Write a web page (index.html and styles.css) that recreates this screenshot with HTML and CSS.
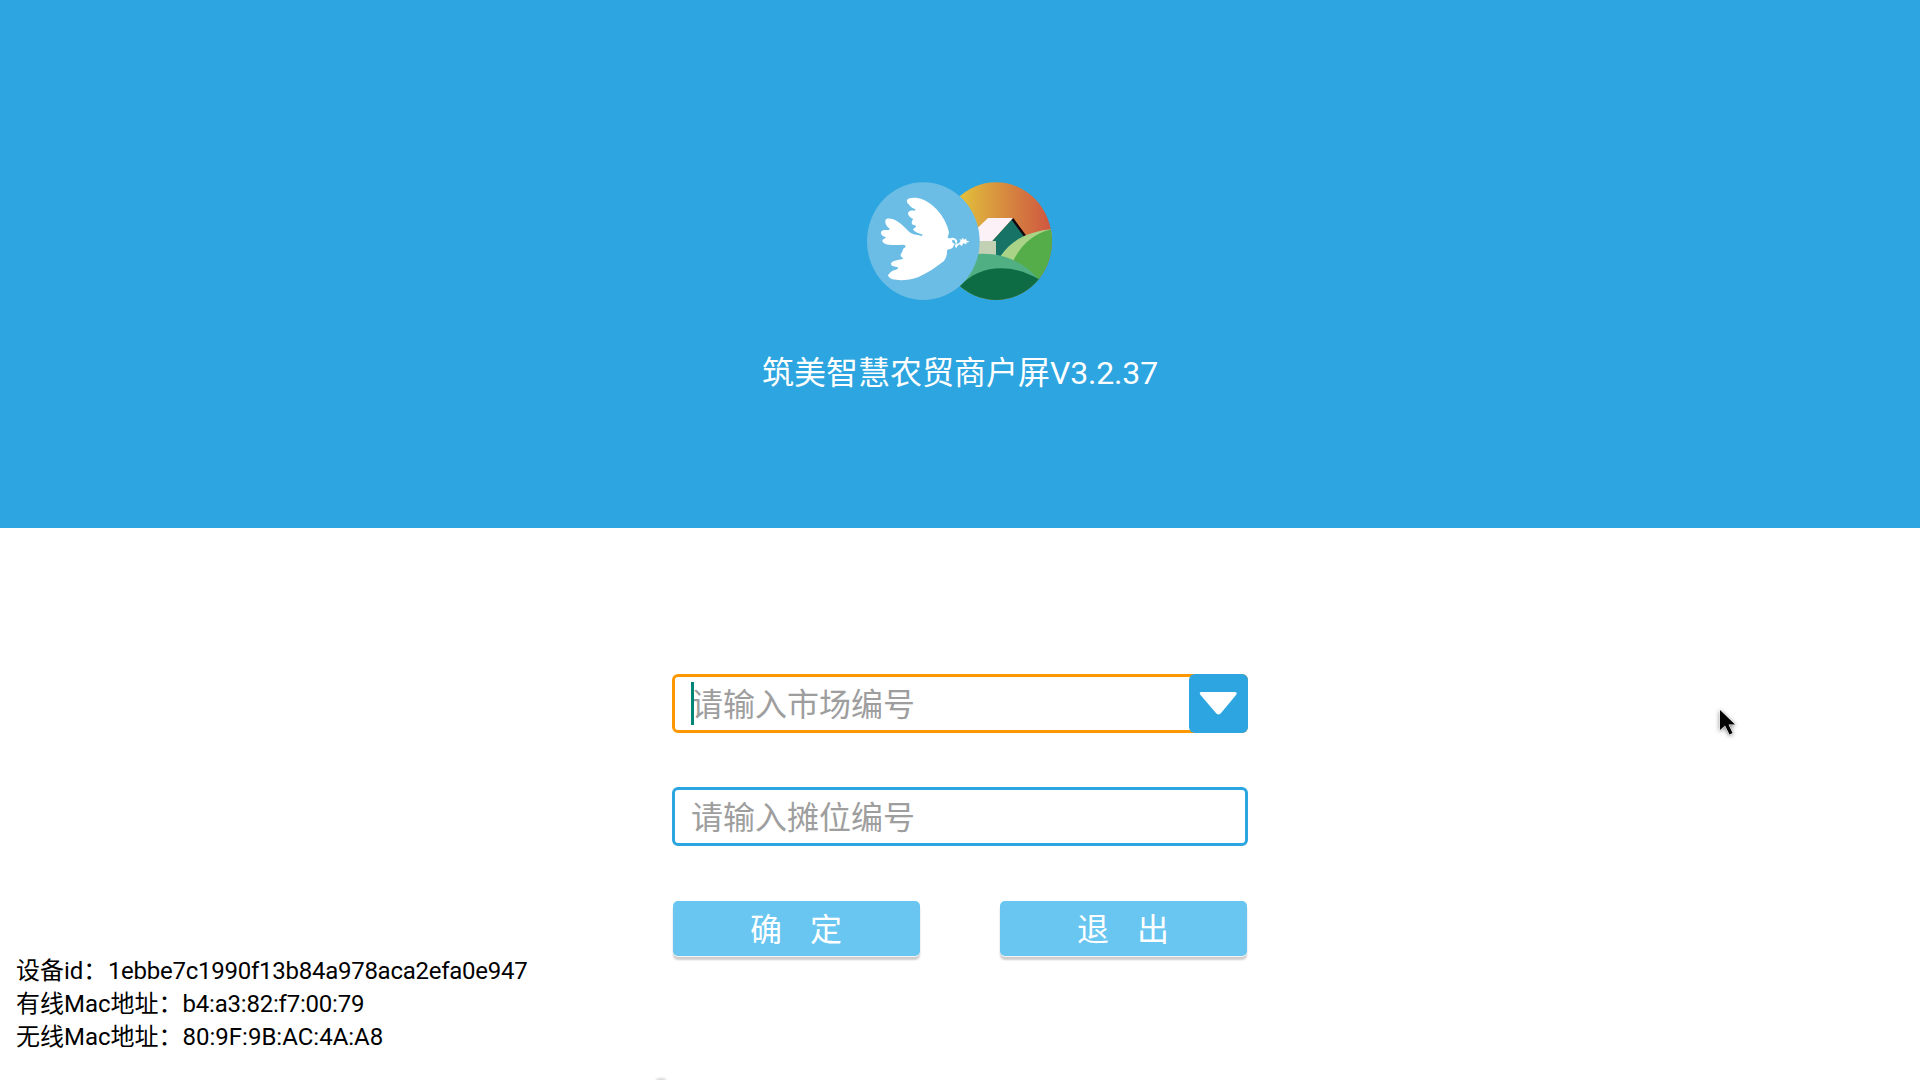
FILE: index.html
```html
<!DOCTYPE html>
<html lang="zh-CN">
<head>
<meta charset="utf-8">
<title>筑美智慧农贸商户屏</title>
<link rel="stylesheet" href="styles.css">
</head>
<body>
<header class="banner">
  <svg class="logo" viewBox="0 0 660 420" aria-hidden="true">
    <defs>
      <linearGradient id="sky" x1="330" y1="0" x2="606" y2="0" gradientUnits="userSpaceOnUse">
        <stop offset="0" stop-color="#e2c03b"/><stop offset=".5" stop-color="#d6893f"/><stop offset="1" stop-color="#cf5540"/>
      </linearGradient>
      <clipPath id="disc"><ellipse cx="438" cy="213.500" rx="168" ry="176.500"/></clipPath>
    </defs>
    <g clip-path="url(#disc)">
      <path fill="url(#sky)" d="M270 30h340v370H270z"/>
      <path fill="#fbf1f7" d="M370 186l44-42h75l-62 69h-60z"/>
      <path fill="#c2d1b4" d="M370 213h68v50h-68z"/>
      <path fill="#177366" d="M427 213l60-66 39 51-65 65h-23v-50z"/>
      <path fill="#100508" d="M485 149l5-5 38 52-7 3z"/>
      <path fill="#a9d488" d="M450 261C485 207 540 182 612 177L570 290H470z"/>
      <path fill="#55ad49" d="M490 272C513 225 551 188 610 177v170h-60z"/>
      <path fill="#50b083" d="M360 253C450 244 508 266 567 328L500 380H320V253z"/>
      <path fill="#0d6c43" d="M328 350C390 281 485 280 567 328L600 400H320z"/>
    </g>
    <ellipse cx="220" cy="213.500" rx="169" ry="176.500" fill="#6bbde5"/>
    <path fill="#fff" d="M171 90C177 81 202 82 220 89C258 105 290 149 297 187L293 203C299 207 303 203 309 203L317 206L322 213L319 222L327 220L332 213L328 208L335 209L338 203L342 209L349 205L348 211L359 215L348 218L350 223L340 220L335 229L329 223L322 228L320 234L315 230L317 220L313 210L306 211L307 217L314 222L307 235L291 240C292 250 290 263 281 274C259 291 232 310 204 322C177 332 145 332 127 328C115 323 111 315 117 312C122 303 132 301 143 297L144 292C135 290 124 289 123 282C123 273 143 270 158 267L159 263C151 262 150 254 155 248C160 242 156 237 163 234C170 229 168 225 158 224C137 226 116 226 105 221C96 217 94 210 102 207L108 202C98 200 92 194 93 186C96 179 106 180 117 180L119 176C109 170 103 157 107 149C113 143 127 146 139 152C158 163 171 181 184 190C193 195 203 195 216 198L218 194C205 190 191 185 189 178L198 170L196 166C183 164 184 158 187 151L190 147C180 143 173 136 174 128C178 121 187 121 194 122L197 118C188 116 179 109 176 103C171 99 170 95 171 90Z"/>
  </svg>
  <h1 class="title">筑美智慧农贸商户屏<span class="version">V3.2.37</span></h1>
</header>
<main class="panel">
  <form class="form">
    <div class="field field-active">
      <span class="placeholder">请输入市场编号</span>
      <i class="caret"></i>
      <button class="drop" type="button" aria-label="展开">
        <svg viewBox="0 0 59 59"><path fill="#fff" d="M12.500 18h33q3.500 0 1.500 3L32.500 38.500q-3 4-6 0L11.500 21q-2-3 1-3z"/></svg>
      </button>
    </div>
    <div class="field"><span class="placeholder">请输入摊位编号</span></div>
    <div class="actions">
      <button class="action" type="button"><span>确</span><span>定</span></button>
      <button class="action" type="button"><span>退</span><span>出</span></button>
    </div>
  </form>
  <div class="device">
    <div>设备id：<span class="device-id">1ebbe7c1990f13b84a978aca2efa0e947</span></div>
    <div>有线Mac地址：<span class="wired-mac">b4:a3:82:f7:00:79</span></div>
    <div>无线Mac地址：80:9F:9B:AC:4A:A8</div>
  </div>
  <i class="speck"></i>
</main>
<svg class="pointer" viewBox="0 0 30 36" aria-hidden="true"><path d="M6 4v20l5-4.500 4.500 9 3-1.500-4-8.500H21z"/></svg>
</body>
</html>
```
FILE: styles.css
```css
* { box-sizing: border-box; }
body {
  margin: 0;
  width: 1920px;
  height: 1080px;
  overflow: hidden;
  position: relative;
  display: flex;
  flex-direction: column;
  background: #fff;
  font-family: Roboto, "Noto Sans CJK SC", sans-serif;
}
.banner {
  height: 528px;
  flex: none;
  background: #2ca5e0;
  display: flex;
  flex-direction: column;
  align-items: center;
  padding-top: 170px;
}
.logo { width: 220px; height: 140px; }
.title {
  margin: 39px 0 0;
  font-size: 32px;
  line-height: 48px;
  font-weight: 400;
  color: #fff;
}
.version { letter-spacing: -.18px; }
.panel {
  flex: 1;
  position: relative;
  padding-top: 146px;
}
.form {
  width: 576px;
  margin: 0 auto;
  display: flex;
  flex-direction: column;
  gap: 54px;
}
.field {
  position: relative;
  height: 59px;
  border: 3px solid #2ca5e0;
  border-radius: 6px;
  padding-left: 16px;
  display: flex;
  align-items: center;
}
.field-active { border-color: #ff9800; }
.placeholder {
  padding-top: 2px;
  font-size: 32px;
  line-height: 48px;
  color: #9e9e9e;
}
.caret {
  position: absolute;
  left: 16px;
  top: 5px;
  width: 3px;
  height: 43px;
  background: #008577;
}
.drop {
  width: 59px;
  height: 59px;
  margin: -3px -3px -3px auto;
  padding: 0;
  border: 0;
  border-radius: 6px;
  background: #2ca5e0;
}
.drop svg { display: block; }
.actions {
  display: flex;
  justify-content: space-between;
  padding: 1px 1px 0;
}
.action {
  width: 247px;
  height: 55px;
  padding: 2px 1px 0 0;
  border: 0;
  border-radius: 5px;
  background: #68c6f1;
  box-shadow: 0 1px 0 #f4f4f4, 0 4px 2px rgba(0, 0, 0, .2);
  color: #fff;
  font: inherit;
  font-size: 32px;
  line-height: 48px;
  display: flex;
  justify-content: center;
  align-items: center;
  gap: 28px;
}
.device {
  position: absolute;
  left: 16px;
  bottom: 26px;
  font-size: 24px;
  line-height: 33px;
  color: #000;
}
.device-id { margin-left: .5px; letter-spacing: -.26px; }
.wired-mac { letter-spacing: -.22px; }
.speck {
  position: absolute;
  left: 656px;
  bottom: -2px;
  width: 10px;
  height: 4px;
  border-radius: 50%;
  background: rgba(0, 0, 0, .16);
  filter: blur(1px);
}
.pointer {
  position: absolute;
  left: 1714px;
  top: 706px;
  width: 30px;
  height: 36px;
  fill: #000;
  stroke: #fff;
  stroke-width: 1;
  paint-order: stroke;
  filter: drop-shadow(0 1px 2px rgba(0, 0, 0, .5));
}
```
